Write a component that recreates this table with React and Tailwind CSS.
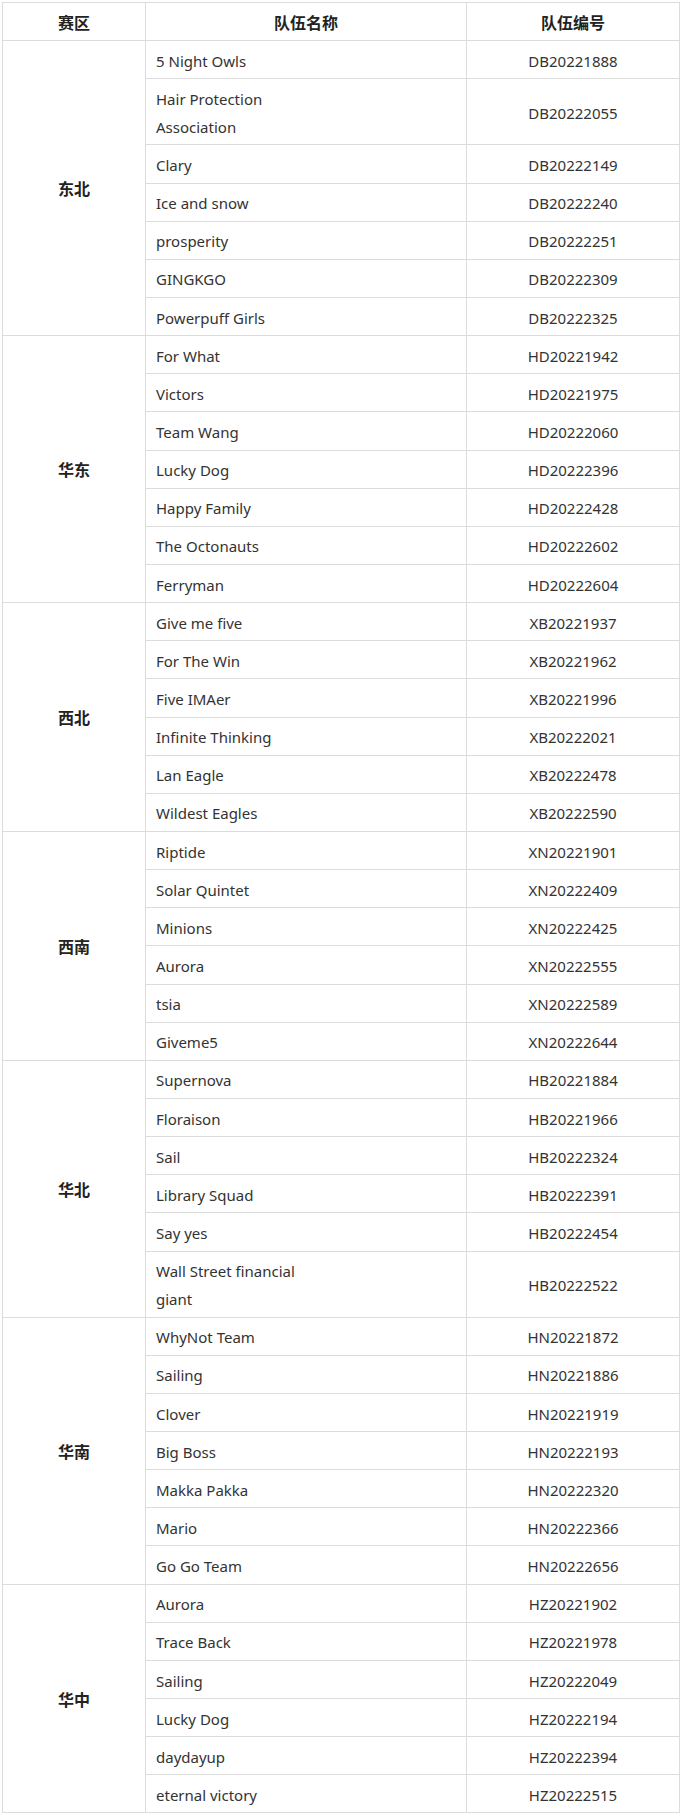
const regions = [
  {
    name: "东北",
    teams: [
      ["5 Night Owls", "DB20221888"],
      ["Hair Protection\nAssociation", "DB20222055"],
      ["Clary", "DB20222149"],
      ["Ice and snow", "DB20222240"],
      ["prosperity", "DB20222251"],
      ["GINGKGO", "DB20222309"],
      ["Powerpuff Girls", "DB20222325"],
    ],
  },
  {
    name: "华东",
    teams: [
      ["For What", "HD20221942"],
      ["Victors", "HD20221975"],
      ["Team Wang", "HD20222060"],
      ["Lucky Dog", "HD20222396"],
      ["Happy Family", "HD20222428"],
      ["The Octonauts", "HD20222602"],
      ["Ferryman", "HD20222604"],
    ],
  },
  {
    name: "西北",
    teams: [
      ["Give me five", "XB20221937"],
      ["For The Win", "XB20221962"],
      ["Five IMAer", "XB20221996"],
      ["Infinite Thinking", "XB20222021"],
      ["Lan Eagle", "XB20222478"],
      ["Wildest Eagles", "XB20222590"],
    ],
  },
  {
    name: "西南",
    teams: [
      ["Riptide", "XN20221901"],
      ["Solar Quintet", "XN20222409"],
      ["Minions", "XN20222425"],
      ["Aurora", "XN20222555"],
      ["tsia", "XN20222589"],
      ["Giveme5", "XN20222644"],
    ],
  },
  {
    name: "华北",
    teams: [
      ["Supernova", "HB20221884"],
      ["Floraison", "HB20221966"],
      ["Sail", "HB20222324"],
      ["Library Squad", "HB20222391"],
      ["Say yes", "HB20222454"],
      ["Wall Street financial\ngiant", "HB20222522"],
    ],
  },
  {
    name: "华南",
    teams: [
      ["WhyNot Team", "HN20221872"],
      ["Sailing", "HN20221886"],
      ["Clover", "HN20221919"],
      ["Big Boss", "HN20222193"],
      ["Makka Pakka", "HN20222320"],
      ["Mario", "HN20222366"],
      ["Go Go Team", "HN20222656"],
    ],
  },
  {
    name: "华中",
    teams: [
      ["Aurora", "HZ20221902"],
      ["Trace Back", "HZ20221978"],
      ["Sailing", "HZ20222049"],
      ["Lucky Dog", "HZ20222194"],
      ["daydayup", "HZ20222394"],
      ["eternal victory", "HZ20222515"],
    ],
  },
]

const cell = "border border-[#dcdcdc] pt-[5.6px] pb-[3.55px] leading-[28px] align-middle"

export default function App() {
  return (
    <div
      className="bg-white p-[2px] text-[15px] text-[#333]"
      style={{ fontFamily: '"Noto Sans", "Noto Sans CJK SC", sans-serif' }}
    >
      <table className="w-[677px] table-fixed border-collapse">
        <colgroup>
          <col className="w-[143px]" />
          <col className="w-[321px]" />
          <col className="w-[213px]" />
        </colgroup>
        <thead>
          <tr>
            <th className={`${cell} text-center text-[16px] font-bold text-[#222]`}>赛区</th>
            <th className={`${cell} text-center text-[16px] font-bold text-[#222]`}>队伍名称</th>
            <th className={`${cell} text-center text-[16px] font-bold text-[#222]`}>队伍编号</th>
          </tr>
        </thead>
        <tbody>
          {regions.map((region) =>
            region.teams.map(([team, code], i) => (
              <tr key={region.name + code}>
                {i === 0 && (
                  <td
                    rowSpan={region.teams.length}
                    className={`${cell} text-center text-[16px] font-bold text-[#222]`}
                  >
                    {region.name}
                  </td>
                )}
                <td className={`${cell} whitespace-pre-line px-[10px] text-left`}>{team}</td>
                <td className={`${cell} text-center`}>{code}</td>
              </tr>
            ))
          )}
        </tbody>
      </table>
    </div>
  )
}
